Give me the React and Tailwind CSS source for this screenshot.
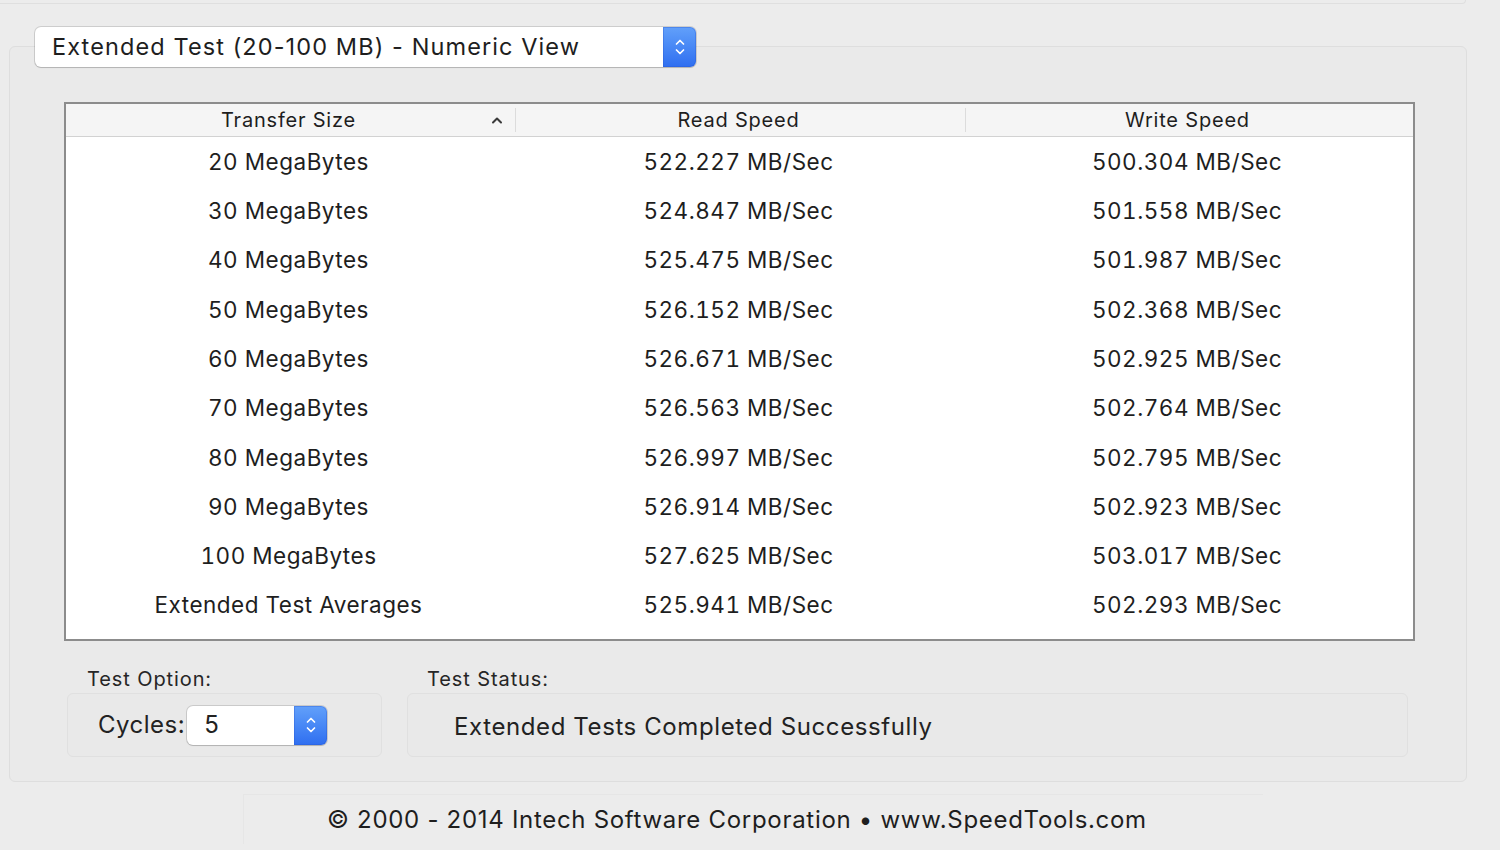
import React from "react";

const rows = [
  ["20 MegaBytes", "522.227 MB/Sec", "500.304 MB/Sec"],
  ["30 MegaBytes", "524.847 MB/Sec", "501.558 MB/Sec"],
  ["40 MegaBytes", "525.475 MB/Sec", "501.987 MB/Sec"],
  ["50 MegaBytes", "526.152 MB/Sec", "502.368 MB/Sec"],
  ["60 MegaBytes", "526.671 MB/Sec", "502.925 MB/Sec"],
  ["70 MegaBytes", "526.563 MB/Sec", "502.764 MB/Sec"],
  ["80 MegaBytes", "526.997 MB/Sec", "502.795 MB/Sec"],
  ["90 MegaBytes", "526.914 MB/Sec", "502.923 MB/Sec"],
  ["100 MegaBytes", "527.625 MB/Sec", "503.017 MB/Sec"],
  ["Extended Test Averages", "525.941 MB/Sec", "502.293 MB/Sec"],
];

function Stepper({ w, h }) {
  return (
    <div
      className="flex items-center justify-center rounded-r-[6px] bg-gradient-to-b from-[#62a0fa] to-[#2f6ef0] shadow-[inset_0_0_0_1px_rgba(40,90,210,0.35)]"
      style={{ width: w, height: h }}
    >
      <svg width="12" height="22" viewBox="0 0 12 22" fill="none">
        <path d="M2.5 8 L6 4.5 L9.5 8" stroke="white" strokeWidth="1.7" strokeLinecap="round" strokeLinejoin="round" />
        <path d="M2.5 14 L6 17.5 L9.5 14" stroke="white" strokeWidth="1.7" strokeLinecap="round" strokeLinejoin="round" />
      </svg>
    </div>
  );
}

export default function App() {
  return (
    <div className="w-[1500px] h-[850px] bg-[#ececec] overflow-hidden font-['Inter',sans-serif] text-[#222]">
      <div className="h-[4px] w-[1466px] border-b border-r border-[#dfdfdf] rounded-br-[6px]" />
      <div className="ml-[9px] mt-[42px] w-[1458px] h-[736px] border border-[#dedede] rounded-[6px] bg-[#eaeaea] flex flex-col">
        <div className="-mt-[20px] ml-[25px] w-[661px] h-[40px] flex rounded-[6px] bg-white shadow-[0_0_0_1px_rgba(0,0,0,0.13),0_1px_1px_rgba(0,0,0,0.12)]">
          <div className="flex-1 flex items-center pl-[17px] text-[23.5px] tracking-[1.1px] text-[#1e1e1e] whitespace-nowrap">
            Extended Test (20-100 MB) - Numeric View
          </div>
          <Stepper w={33} h={40} />
        </div>

        <div className="mt-[35px] ml-[54px] w-[1351px] h-[539px] border-2 border-[#8c8c8c] bg-white flex flex-col">
          <div className="h-[33px] flex bg-[#f5f5f5] border-b border-[#d2d2d2] text-[20px] tracking-[0.8px] text-[#1e1e1e]">
            <div className="w-[450px] relative flex items-center justify-center pr-[4px] border-r border-[#dcdcdc] my-[4px]">
              Transfer Size
              <svg className="absolute right-[12px] top-[8px]" width="12" height="8" viewBox="0 0 12 8" fill="none">
                <path d="M2 6.5 L6 2.5 L10 6.5" stroke="#3a3a3a" strokeWidth="2" strokeLinecap="round" strokeLinejoin="round" />
              </svg>
            </div>
            <div className="w-[450px] flex items-center justify-center pr-[4px] border-r border-[#dcdcdc] my-[4px]">Read Speed</div>
            <div className="flex-1 flex items-center justify-center pr-[4px] my-[4px]">Write Speed</div>
          </div>
          <div className="flex flex-col text-[22.5px] tracking-[0.5px] tabular-nums text-[#1e1e1e]">
            {rows.map((r) => (
              <div key={r[0]} className="h-[49.3px] flex items-center">
                <div className="w-[450px] text-center pr-[5px]">{r[0]}</div>
                <div className="w-[450px] text-center pr-[5px]">{r[1]}</div>
                <div className="flex-1 text-center pr-[5px]">{r[2]}</div>
              </div>
            ))}
          </div>
        </div>

        <div className="mt-[27px] ml-[57px] flex gap-[25px]">
          <div className="flex flex-col">
            <div className="h-[25px] pl-[20px] text-[20px] leading-[22px] tracking-[0.9px] text-[#262626]">Test Option:</div>
            <div className="w-[315px] h-[64px] border border-[#e0e0e0] rounded-[6px] bg-[#e9e9e9] flex items-center pl-[30px]">
              <span className="text-[24px] tracking-[0.5px] text-[#222]">Cycles:</span>
              <div className="ml-[2px] w-[140px] h-[39px] flex rounded-[6px] bg-white shadow-[0_0_0_1px_rgba(0,0,0,0.13),0_1px_1px_rgba(0,0,0,0.12)]">
                <div className="flex-1 flex items-center pl-[17px] text-[24px]">5</div>
                <Stepper w={33} h={39} />
              </div>
            </div>
          </div>
          <div className="flex flex-col">
            <div className="h-[25px] pl-[20px] text-[20px] leading-[22px] tracking-[0.9px] text-[#262626]">Test Status:</div>
            <div className="w-[1001px] h-[64px] border border-[#e0e0e0] rounded-[6px] bg-[#e9e9e9] flex items-center pl-[46px] pt-[4px] text-[24px] tracking-[0.6px] text-[#222]">
              Extended Tests Completed Successfully
            </div>
          </div>
        </div>
      </div>

      <div className="mt-[12px] ml-[243px] w-[1020px] h-[50px] border-l border-t border-[#e6e6e6] flex items-center pl-[83px] text-[24px] tracking-[0.7px] text-[#1e1e1e] whitespace-nowrap">
        © 2000 - 2014 Intech Software Corporation • www.SpeedTools.com
      </div>
    </div>
  );
}
